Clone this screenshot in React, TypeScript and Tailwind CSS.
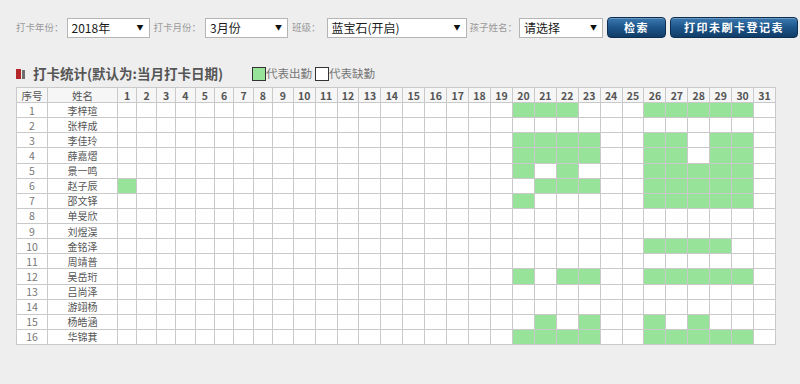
const names = [
  "李梓瑄",
  "张梓成",
  "李佳玲",
  "薛嘉熠",
  "景一鸣",
  "赵子辰",
  "邵文铎",
  "单旻欣",
  "刘煜淏",
  "金铭泽",
  "周靖普",
  "吴岳珩",
  "吕尚泽",
  "游翊杨",
  "杨皓涵",
  "华锦萁",
];

// days marked as present for each child
const present: number[][] = [
  [20, 21, 22, 26, 27, 28, 29, 30],
  [],
  [20, 21, 22, 23, 26, 27, 29, 30],
  [20, 21, 22, 23, 26, 27, 29, 30],
  [20, 22, 26, 27, 28, 29, 30],
  [1, 21, 22, 23, 26, 27, 28, 29, 30],
  [20, 26, 27, 28, 29, 30],
  [],
  [],
  [26, 27, 28, 29],
  [],
  [20, 22, 23, 26, 27, 28, 29, 30],
  [],
  [],
  [21, 23, 26, 28],
  [20, 21, 22, 23, 26, 27, 28, 29, 30],
];

const days = Array.from({ length: 31 }, (_, i) => i + 1);

const dayWidth = (d: number) =>
  d <= 8 ? "w-[19.4px]" : d === 9 ? "w-[20.6px]" : "w-[21.93px]";

interface SelectProps {
  value: string;
  className: string;
}

const FakeSelect = ({ value, className }: SelectProps) => {
  return (
    <div
      className={`flex h-[20px] shrink-0 items-center justify-between border border-[#b5b5b5] bg-white pl-[4px] pr-[5px] ${className}`}
    >
      <span className="whitespace-nowrap text-[12px] leading-none text-[#1a1a1a]">
        {value}
      </span>
      <span className="text-[7px] leading-none text-[#111]">▼</span>
    </div>
  );
};

const Label = ({ text, className }: { text: string; className: string }) => (
  <span
    className={`shrink-0 whitespace-nowrap text-[9.5px] leading-none text-[#9a9a9a] ${className}`}
  >
    {text}
  </span>
);

const Button = ({ text, className }: { text: string; className: string }) => (
  <button
    className={`flex h-[21px] shrink-0 items-center justify-center rounded-[4px] border border-[#0d2f52] bg-gradient-to-b from-[#3b79b0] via-[#1e5589] to-[#113d68] text-[11px] font-bold leading-none tracking-[1.5px] text-white shadow-[inset_0_1px_0_rgba(255,255,255,0.25)] ${className}`}
  >
    {text}
  </button>
);

export default function App() {
  return (
    <div className="h-[384px] w-[800px] overflow-hidden bg-[#eeeeee] font-['Noto_Sans_CJK_SC','Liberation_Sans',sans-serif]">
      <div className="flex items-center pl-[16px] pt-[17px]">
        <Label text="打卡年份：" className="mr-[3px]" />
        <FakeSelect value="2018年" className="w-[83px]" />
        <Label text="打卡月份：" className="ml-[4px] mr-[4px]" />
        <FakeSelect value="3月份" className="w-[83px]" />
        <Label text="班级：" className="ml-[4px] mr-[6px]" />
        <FakeSelect value="蓝宝石(开启)" className="w-[140px]" />
        <Label text="孩子姓名：" className="ml-[3px] mr-[2px]" />
        <FakeSelect value="请选择" className="w-[84px]" />
        <Button text="检索" className="ml-[4px] w-[59px]" />
        <Button text="打印未刷卡登记表" className="ml-[4px] w-[128px]" />
      </div>

      <div className="mt-[29px] flex h-[14px] items-center pl-[16px]">
        <div className="flex w-[236px] items-center">
          <span className="h-[10px] w-[5px] bg-[#b3262a]" />
          <span className="ml-[1px] h-[9px] w-[3px] bg-[#6e6e6e]" />
          <span className="ml-[8px] whitespace-nowrap text-[13.5px] font-bold leading-none text-[#555]">
            打卡统计(默认为:当月打卡日期)
          </span>
        </div>
        <span className="h-[14px] w-[14px] border border-[#333] bg-[#98e39a]" />
        <span className="text-[11.5px] leading-none text-[#777]">代表出勤</span>
        <span className="ml-[3px] h-[14px] w-[14px] border border-[#333] bg-white" />
        <span className="text-[11.5px] leading-none text-[#777]">代表缺勤</span>
      </div>

      <table className="ml-[16px] mt-[6px] w-[759px] table-fixed border-collapse bg-white text-center">
        <colgroup>
          <col className="w-[31px]" />
          <col className="w-[70px]" />
          {days.map((d) => (
            <col key={d} className={dayWidth(d)} />
          ))}
        </colgroup>
        <thead>
          <tr className="h-[15px] bg-[#f6f6f6]">
            <th className="border border-[#c9c9c9] p-0 text-[10.5px] font-normal leading-[13px] text-[#555]">
              序号
            </th>
            <th className="border border-[#c9c9c9] p-0 text-[10.5px] font-normal leading-[13px] text-[#555]">
              姓名
            </th>
            {days.map((d) => (
              <th
                key={d}
                className="border border-[#c9c9c9] p-0 text-[10.5px] font-bold leading-[13px] text-[#555]"
              >
                {d}
              </th>
            ))}
          </tr>
        </thead>
        <tbody>
          {names.map((name, i) => (
            <tr key={name} className="h-[15.125px]">
              <td className="border border-[#c9c9c9] p-0 text-[10.5px] leading-[13px] text-[#777]">
                {i + 1}
              </td>
              <td className="border border-[#c9c9c9] p-0 text-[10px] leading-[13px] text-[#555]">
                {name}
              </td>
              {days.map((d) => (
                <td
                  key={d}
                  className={`border border-[#c9c9c9] p-0 ${
                    present[i].includes(d) ? "bg-[#98e39a]" : "bg-white"
                  }`}
                />
              ))}
            </tr>
          ))}
        </tbody>
      </table>
    </div>
  );
}
